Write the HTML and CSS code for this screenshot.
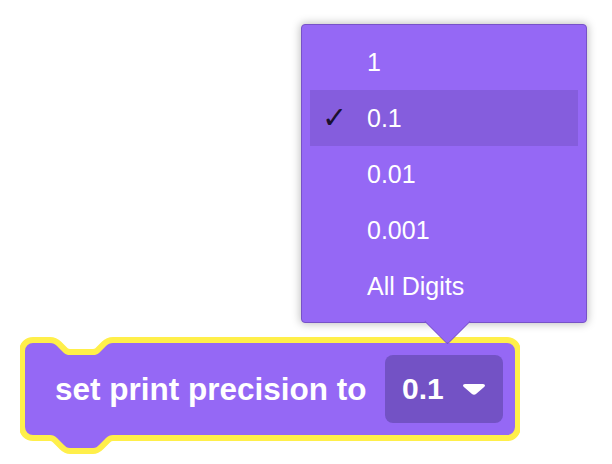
FILE: index.html
```html
<!DOCTYPE html>
<html>
<head>
<title>set print precision</title>
<link rel="stylesheet" href="styles.css">
</head>
<body>
<div class="stage">

	<div class="block">
		<svg class="block-shape" width="500" height="120" viewBox="0 0 500 120">
			<path d="M5,14 A8,8 0 0 1 13,6 H30 C33,6 35,7 37,9 L44,16 C46,17.5 47,18 50,18 H73 C76,18 77,17.5 79,16 L86,9 C88,7 90,6 93,6 H487 A8,8 0 0 1 495,14 V90 A8,8 0 0 1 487,98 H93 C90,98 88,99 86,101 L79,108 C77,110 76,111 73,111 H50 C47,111 46,110 44,108 L37,101 C35,99 33,98 30,98 H13 A8,8 0 0 1 5,90 Z" fill="#9568f5" stroke="#ffef4a" stroke-width="12" stroke-linejoin="round" paint-order="stroke"/>
		</svg>
		<div class="block-body">
			<span class="label">set print precision to</span>
			<div class="field">
				<span class="field-value">0.1</span>
				<svg class="field-arrow" width="22" height="11" viewBox="0 0 22 11">
					<path d="M2,0 H20 C21.8,0 22.6,1.6 21.4,2.8 L13,10 C11.9,11 10.1,11 9,10 L0.6,2.8 C-0.6,1.6 0.2,0 2,0 Z" fill="#fff"/>
				</svg>
			</div>
		</div>
	</div>

	<!-- dropdown menu -->
	<div class="menu">
		<div class="item"><span class="check"></span><span class="text">1</span></div>
		<div class="item selected"><span class="check">&#10003;</span><span class="text">0.1</span></div>
		<div class="item"><span class="check"></span><span class="text">0.01</span></div>
		<div class="item"><span class="check"></span><span class="text">0.001</span></div>
		<div class="item"><span class="check"></span><span class="text">All Digits</span></div>
		<div class="menu-arrow"></div>
	</div>

</div>
</body>
</html>
```

FILE: styles.css
```css
body{
	margin:0;
	background:#fff;
	font-family:"Liberation Sans", Arial, Helvetica, sans-serif;
}
.stage{
	position:relative;
	width:612px;
	height:464px;
	overflow:hidden;
}

/* block */
.block{
	position:relative;
	width:500px;
	height:120px;
	margin:337px 0 0 20px;
	padding-top:6px;
	box-sizing:border-box;
}
.block-shape{
	position:absolute;
	left:0;
	top:0;
}
.block-body{
	position:relative;
	display:flex;
	align-items:center;
	height:92px;
	padding:0 17px 0 35px;
	box-sizing:border-box;
}
.label{
	color:#fff;
	font-weight:bold;
	font-size:31.5px;
	white-space:nowrap;
}
.field{
	display:flex;
	align-items:center;
	height:68px;
	margin-left:auto;
	padding:0 18px 0 17px;
	background:#7352c5;
	border-radius:8px;
	box-sizing:border-box;
	width:118px;
}
.field-value{
	color:#fff;
	font-weight:bold;
	font-size:30px;
}
.field-arrow{
	margin-left:auto;
}

/* menu */
.menu{
	position:absolute;
	left:301px;
	top:24px;
	width:286px;
	height:299px;
	padding:9px 8px 8px;
	box-sizing:border-box;
	background:#9568f5;
	border:1px solid #7752c8;
	border-radius:4px;
	box-shadow:0 0 8px 1px rgba(0,0,0,.25);
}
.item{
	display:flex;
	align-items:center;
	height:56px;
	color:#fff;
	font-size:25px;
}
.item.selected{
	background:#855ddd;
}
.check{
	width:57px;
	padding-left:12px;
	box-sizing:border-box;
	font-family:"DejaVu Sans", sans-serif;
	font-weight:bold;
	font-size:30px;
	line-height:1;
	color:#1b1030;
}
.menu-arrow{
	position:absolute;
	left:129px;
	top:280px;
	width:32px;
	height:32px;
	background:#9568f5;
	border-right:1px solid #7752c8;
	border-bottom:1px solid #7752c8;
	border-bottom-right-radius:3px;
	transform:rotate(45deg);
}
```
